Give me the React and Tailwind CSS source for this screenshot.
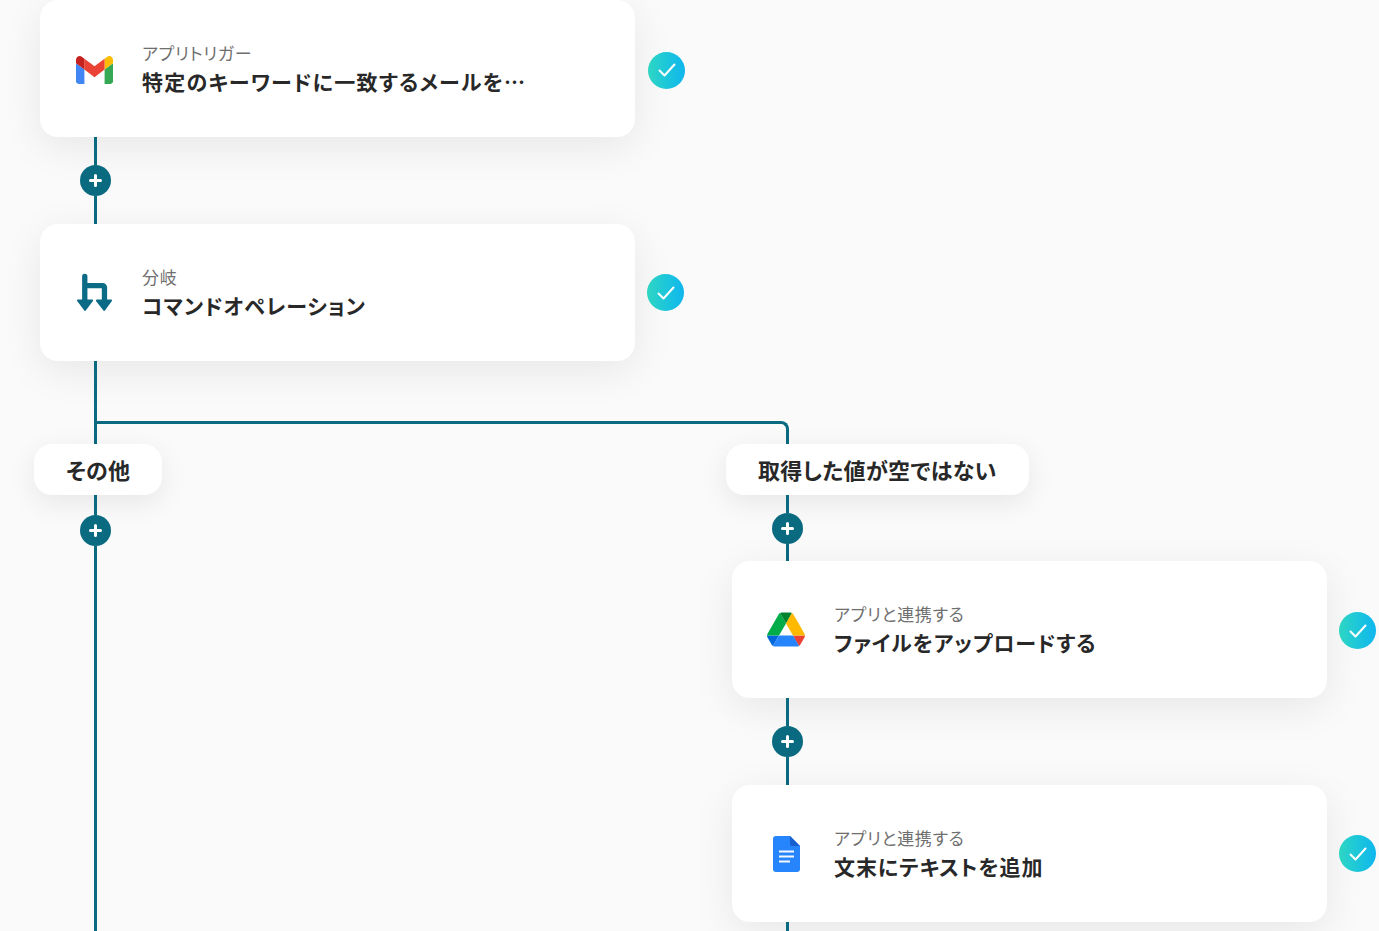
import React from 'react';

const GmailIcon = () => (
    <svg className="w-[37px] h-[28px] mt-[2px]" viewBox="52 42 88 66">
        <path fill="#4285f4" d="M58 108h14V74L52 59v43c0 3.32 2.69 6 6 6" />
        <path fill="#34a853" d="M120 108h14c3.32 0 6-2.69 6-6V59l-20 15" />
        <path fill="#fbbc04" d="M120 48v26l20-15v-8c0-7.42-8.47-11.65-14.4-7.2" />
        <path fill="#ea4335" d="M72 74V48l24 18 24-18v26L96 92" />
        <path fill="#c5221f" d="M52 51v8l20 15V48l-5.6-4.2c-5.94-4.45-14.4-.22-14.4 7.2" />
    </svg>
);

const BranchIcon = () => (
    <svg className="w-[38px] h-[39px] ml-[2px]" viewBox="0 0 38 39">
        <path d="M8.2 2.5V28M8.2 12.2H27a2 2 0 0 1 2 2V28" fill="none" stroke="#0b6a85" strokeWidth="5.6" strokeLinecap="round" strokeLinejoin="round" />
        <path d="M1 28H16L8.5 38Z" fill="#0b6a85" stroke="#0b6a85" strokeWidth="2" strokeLinejoin="round" />
        <path d="M21 28H36L28.7 38Z" fill="#0b6a85" stroke="#0b6a85" strokeWidth="2" strokeLinejoin="round" />
    </svg>
);

const DriveIcon = () => (
    <svg className="w-[39px] h-[35px]" viewBox="0 0 87.3 78">
        <path d="m6.6 66.85 3.85 6.65c.8 1.4 1.95 2.5 3.3 3.3l13.75-23.8h-27.5c0 1.55.4 3.1 1.2 4.5z" fill="#0066da" />
        <path d="m43.65 25-13.75-23.8c-1.35.8-2.5 1.9-3.3 3.3l-25.4 44a9.06 9.06 0 0 0 -1.2 4.5h27.5z" fill="#00ac47" />
        <path d="m73.55 76.8c1.35-.8 2.5-1.9 3.3-3.3l1.6-2.75 7.65-13.25c.8-1.4 1.2-2.95 1.2-4.5h-27.502l5.852 11.5z" fill="#ea4335" />
        <path d="m43.65 25 13.75-23.8c-1.35-.8-2.9-1.2-4.5-1.2h-18.5c-1.6 0-3.15.45-4.5 1.2z" fill="#00832d" />
        <path d="m59.8 53h-32.3l-13.75 23.8c1.35.8 2.9 1.2 4.5 1.2h50.8c1.6 0 3.15-.45 4.5-1.2z" fill="#2684fc" />
        <path d="m73.4 26.5-12.7-22c-.8-1.4-1.95-2.5-3.3-3.3l-13.75 23.8 16.15 28h27.45c0-1.55-.4-3.1-1.2-4.5z" fill="#ffba00" />
    </svg>
);

const DocsIcon = () => (
    <svg className="w-[27px] h-[36px]" viewBox="0 0 27 36">
        <path d="M3 0H17L27 10V33a3 3 0 0 1-3 3H3a3 3 0 0 1-3-3V3a3 3 0 0 1 3-3Z" fill="#2684fc" />
        <path d="M17 0L27 10H19a2 2 0 0 1-2-2Z" fill="#1a5fd0" />
        <path d="M6 14.5H21V16.5H6ZM6 19.5H21V21.5H6ZM6 24.5H17V26.5H6Z" fill="#f4f8ff" />
    </svg>
);

const CheckBadge = ({ className }) => (
    <div className={`flex items-center justify-center w-[37px] h-[37px] shrink-0 rounded-full bg-gradient-to-r from-[#2ed6c2] to-[#10b6ee] ${className}`}>
        <svg className="w-[20px] h-[20px]" viewBox="0 0 20 20" fill="none" stroke="#fff" strokeWidth="2" strokeLinecap="round" strokeLinejoin="round">
            <path d="M2.5 10.5L7.5 15.5L17.5 4.5" />
        </svg>
    </div>
);

const Line = ({ className }) => <div className={`w-[3px] shrink-0 bg-[#0a6a80] ${className}`} />;

const PlusButton = () => (
    <div className="flex items-center justify-center w-[31px] h-[31px] shrink-0 rounded-full bg-[#0a6a80]">
        <svg className="w-[13px] h-[13px]" viewBox="0 0 13 13" fill="none" stroke="#fff" strokeWidth="3" strokeLinecap="round">
            <path d="M6.5 1.5V11.5M1.5 6.5H11.5" />
        </svg>
    </div>
);

const Connector = ({ top = 'h-[28px]', bottom = 'h-[28px]' }) => (
    <div className="flex flex-col shrink-0 items-center w-[31px] ml-[40px]">
        <Line className={top} />
        <PlusButton />
        <Line className={bottom} />
    </div>
);

const StepCard = ({ icon, label, title, tracking = 'tracking-[0.95px]', badgeClass = 'ml-[12px]' }) => (
    <div className="flex items-center shrink-0">
        <div className="flex items-center w-[595px] h-[137px] shrink-0 rounded-[18px] bg-white shadow-[0_10px_40px_rgba(0,0,0,0.08)]">
            <div className="flex items-center justify-center w-[38px] ml-[35px] mr-[29px] shrink-0">{icon}</div>
            <div className="min-w-0 [font-feature-settings:'palt']">
                <div className="text-[17px] leading-[24px] mt-[1px] tracking-[0.7px] text-[#6f6f6f]">{label}</div>
                <div className={`text-[21px] leading-[32px] font-bold text-[#282828] whitespace-nowrap ${tracking}`}>{title}</div>
            </div>
        </div>
        <CheckBadge className={badgeClass} />
    </div>
);

const BranchChip = ({ children }) => (
    <div className="inline-flex items-center self-start shrink-0 h-[51px] px-[32px] -ml-[6px] rounded-[18px] bg-white text-[22px] tracking-[0.3px] font-bold text-[#282828] [font-feature-settings:'palt'] shadow-[0_8px_28px_rgba(0,0,0,0.08)]">
        {children}
    </div>
);

export default function App() {
    return (
        <div className="flex flex-col h-[931px] overflow-hidden pl-[40px] bg-[#fafafa] font-['Noto_Sans_CJK_JP','Noto_Sans',sans-serif]">
            <StepCard
                icon={<GmailIcon />}
                label="アプリトリガー"
                title="特定のキーワードに一致するメールを…"
                tracking="tracking-[1.25px]"
                badgeClass="ml-[13px] mt-[3px]"
            />
            <Connector />
            <StepCard icon={<BranchIcon />} label="分岐" title="コマンドオペレーション" />
            <div className="flex flex-col shrink-0 items-center w-[31px] ml-[40px]">
                <Line className="h-[60px]" />
            </div>
            <div className="w-[695px] h-[23px] shrink-0 ml-[54px] border-l-[3px] border-t-[3px] border-r-[3px] border-[#0a6a80] rounded-tr-lg" />
            <div className="flex flex-1 min-h-0">
                <div className="flex flex-col w-[692px] shrink-0">
                    <BranchChip>その他</BranchChip>
                    <div className="flex flex-col flex-1 items-center w-[31px] ml-[40px]">
                        <Line className="h-[20px]" />
                        <PlusButton />
                        <Line className="flex-1" />
                    </div>
                </div>
                <div className="flex flex-col">
                    <BranchChip>取得した値が空ではない</BranchChip>
                    <Connector top="h-[18px]" bottom="h-[17px]" />
                    <StepCard icon={<DriveIcon />} label="アプリと連携する" title="ファイルをアップロードする" badgeClass="ml-[12px] mt-[2px]" />
                    <Connector />
                    <StepCard icon={<DocsIcon />} label="アプリと連携する" title="文末にテキストを追加" />
                    <div className="flex flex-col shrink-0 items-center w-[31px] ml-[40px]">
                        <Line className="h-[20px]" />
                    </div>
                </div>
            </div>
        </div>
    );
}
